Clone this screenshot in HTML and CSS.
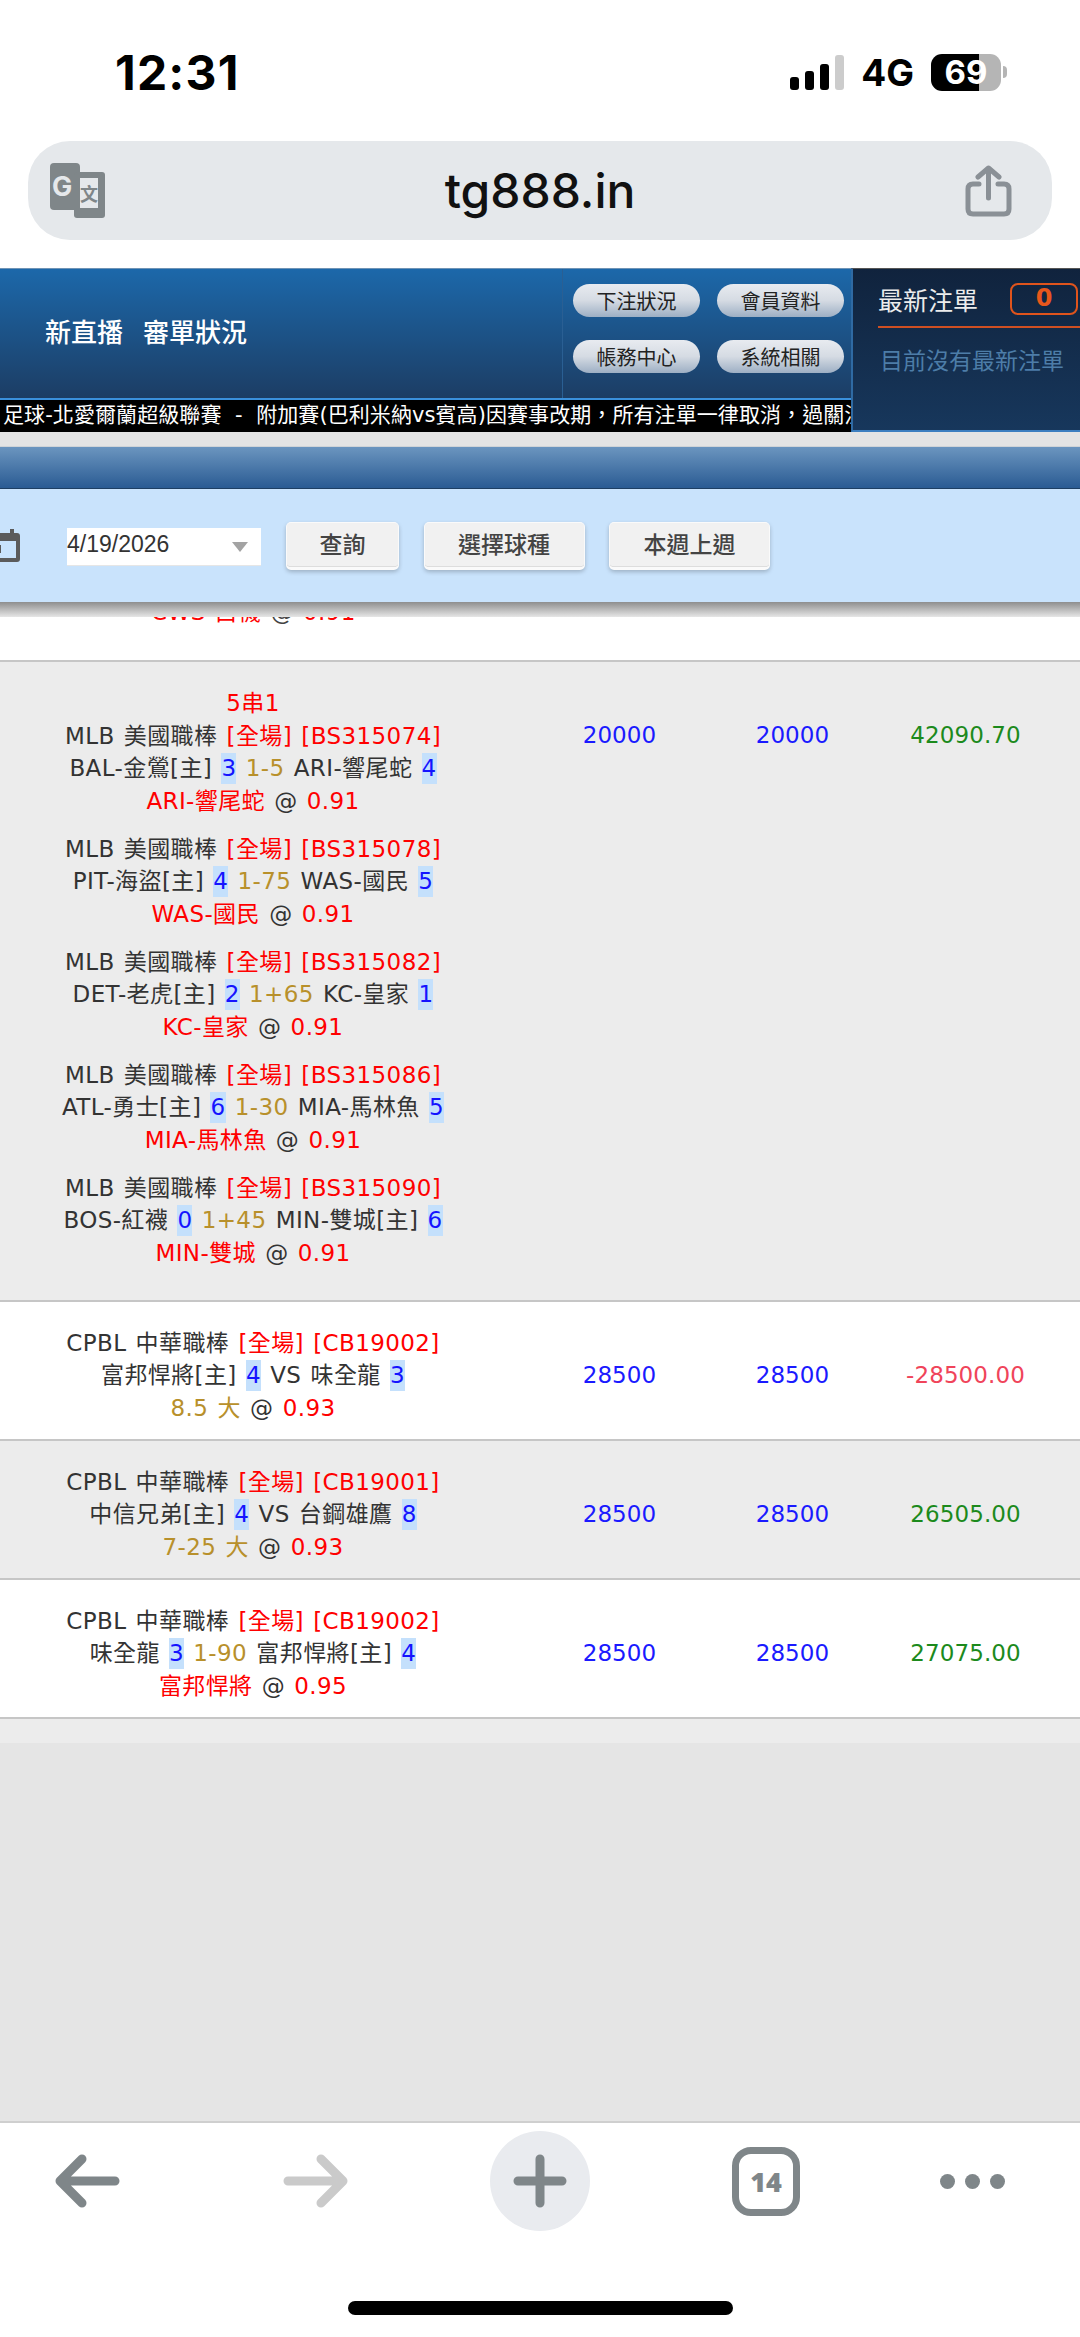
FILE: index.html
```html
<!DOCTYPE html>
<html lang="zh-Hant">
<head>
  <meta charset="UTF-8" />
  <meta name="viewport" content="width=device-width, initial-scale=1.0" />
  <title>tg888.in</title>
  <link rel="stylesheet" href="styles.css">
</head>
<body>
  <div class="phone">
    <div class="status-bar">
      <span class="clock">12:31</span>
      <div class="status-right">
        <div class="signal">
          <i class="bar bar-1"></i><i class="bar bar-2"></i><i class="bar bar-3"></i><i class="bar bar-4"></i>
        </div>
        <span class="network">4G</span>
        <span class="battery">69</span>
        <i class="battery-nub"></i>
      </div>
    </div>

    <div class="url-bar">
      <svg class="translate-icon" width="55" height="55" viewBox="0 0 55 55">
        <rect x="0" y="0" width="30" height="47" rx="4" fill="#7f8689"/>
        <rect x="24" y="9" width="31" height="46" rx="3" fill="#7f8689"/>
        <rect x="30" y="15" width="18" height="30" fill="#e5e8eb"/>
        <text x="2" y="33" class="translate-g">G</text>
        <text x="30" y="38" class="translate-zh">文</text>
      </svg>
      <span class="url-text">tg888.in</span>
      <svg class="share-icon" width="47" height="52" viewBox="0 0 47 52" fill="none" stroke="#8a9096" stroke-width="5" stroke-linecap="round" stroke-linejoin="round">
        <path d="M14 19H8q-5 0-5 5v20q0 5 5 5h31q5 0 5-5V24q0-5-5-5h-6"/>
        <path d="M23.500 33V3M13 12l10.500-9L34 12"/>
      </svg>
    </div>

    <header class="site-header">
      <div class="head-left">
        <div class="head-main">
          <div class="head-title"><span>新直播</span><span>審單狀況</span></div>
          <div class="head-btns">
            <a class="pill">下注狀況</a>
            <a class="pill">會員資料</a>
            <a class="pill">帳務中心</a>
            <a class="pill">系統相關</a>
          </div>
        </div>
        <div class="ticker">足球-北愛爾蘭超級聯賽&nbsp;&nbsp;-&nbsp;&nbsp;附加賽(巴利米納vs賓高)因賽事改期，所有注單一律取消，過關注單以一賠一計算</div>
      </div>
      <aside class="latest">
        <div class="latest-top">
          <span class="latest-title">最新注單</span>
          <span class="latest-badge">0</span>
        </div>
        <div class="latest-msg">目前沒有最新注單</div>
      </aside>
    </header>

    <div class="head-gap"></div>
    <div class="blue-band"></div>

    <div class="toolbar">
      <svg class="calendar-icon" width="36" height="33" viewBox="0 0 36 33">
        <path d="M3 4h7V0h4v4h12V0h4v4h3q3 0 3 3v23q0 3-3 3H3q-3 0-3-3V7q0-3 3-3zM4 12v17h28V12z" fill="#5b5b5b"/>
        <rect x="8" y="16" width="9" height="8" fill="#5b5b5b"/>
      </svg>
      <div class="date-select"><span>4/19/2026</span><i class="date-arrow"></i></div>
      <button class="tool-btn tool-btn-small">查詢</button>
      <button class="tool-btn">選擇球種</button>
      <button class="tool-btn">本週上週</button>
    </div>
    <div class="toolbar-shadow"></div>

    <div class="clip-row">
      <div class="clip-text"><span class="red">CWS-白襪</span> <span class="at">@</span> <span class="red">0.91</span></div>
    </div>

    <table class="bets">
      <colgroup>
        <col class="col-info"><col class="col-num"><col class="col-num"><col class="col-num"><col class="col-end">
      </colgroup>
      <tbody>
        <tr class="row-grey row-parlay">
          <td class="info">
            <div class="red">5串1</div>
            <div class="leg">
              <div>MLB 美國職棒 <span class="red">[全場] [BS315074]</span></div>
              <div>BAL-金鶯[主] <b class="score">3</b> <span class="gold">1-5</span> ARI-響尾蛇 <b class="score">4</b></div>
              <div><span class="red">ARI-響尾蛇</span> @ <span class="red">0.91</span></div>
            </div>
            <div class="leg">
              <div>MLB 美國職棒 <span class="red">[全場] [BS315078]</span></div>
              <div>PIT-海盜[主] <b class="score">4</b> <span class="gold">1-75</span> WAS-國民 <b class="score">5</b></div>
              <div><span class="red">WAS-國民</span> @ <span class="red">0.91</span></div>
            </div>
            <div class="leg">
              <div>MLB 美國職棒 <span class="red">[全場] [BS315082]</span></div>
              <div>DET-老虎[主] <b class="score">2</b> <span class="gold">1+65</span> KC-皇家 <b class="score">1</b></div>
              <div><span class="red">KC-皇家</span> @ <span class="red">0.91</span></div>
            </div>
            <div class="leg">
              <div>MLB 美國職棒 <span class="red">[全場] [BS315086]</span></div>
              <div>ATL-勇士[主] <b class="score">6</b> <span class="gold">1-30</span> MIA-馬林魚 <b class="score">5</b></div>
              <div><span class="red">MIA-馬林魚</span> @ <span class="red">0.91</span></div>
            </div>
            <div class="leg">
              <div>MLB 美國職棒 <span class="red">[全場] [BS315090]</span></div>
              <div>BOS-紅襪 <b class="score">0</b> <span class="gold">1+45</span> MIN-雙城[主] <b class="score">6</b></div>
              <div><span class="red">MIN-雙城</span> @ <span class="red">0.91</span></div>
            </div>
          </td>
          <td class="num blue">20000</td>
          <td class="num blue">20000</td>
          <td class="num green">42090.70</td>
          <td></td>
        </tr>
        <tr>
          <td class="info">
            <div>CPBL 中華職棒 <span class="red">[全場] [CB19002]</span></div>
            <div>富邦悍將[主] <b class="score">4</b> VS 味全龍 <b class="score">3</b></div>
            <div><span class="gold">8.5 大</span> @ <span class="red">0.93</span></div>
          </td>
          <td class="num blue">28500</td>
          <td class="num blue">28500</td>
          <td class="num loss">-28500.00</td>
          <td></td>
        </tr>
        <tr class="row-grey">
          <td class="info">
            <div>CPBL 中華職棒 <span class="red">[全場] [CB19001]</span></div>
            <div>中信兄弟[主] <b class="score">4</b> VS 台鋼雄鷹 <b class="score">8</b></div>
            <div><span class="gold">7-25 大</span> @ <span class="red">0.93</span></div>
          </td>
          <td class="num blue">28500</td>
          <td class="num blue">28500</td>
          <td class="num green">26505.00</td>
          <td></td>
        </tr>
        <tr>
          <td class="info">
            <div>CPBL 中華職棒 <span class="red">[全場] [CB19002]</span></div>
            <div>味全龍 <b class="score">3</b> <span class="gold">1-90</span> 富邦悍將[主] <b class="score">4</b></div>
            <div><span class="red">富邦悍將</span> @ <span class="red">0.95</span></div>
          </td>
          <td class="num blue">28500</td>
          <td class="num blue">28500</td>
          <td class="num green">27075.00</td>
          <td></td>
        </tr>
      </tbody>
    </table>

    <div class="table-end"></div>
    <div class="page-rest"></div>

    <nav class="bottom-bar">
      <div class="nav-row">
        <svg class="nav-back" width="65" height="54" viewBox="0 0 65 54" fill="none" stroke="#7f8689" stroke-width="9" stroke-linecap="round" stroke-linejoin="round">
          <path d="M60 27H5M27 5L5 27l22 22"/>
        </svg>
        <svg class="nav-forward" width="65" height="54" viewBox="0 0 65 54" fill="none" stroke="#cacaca" stroke-width="9" stroke-linecap="round" stroke-linejoin="round">
          <path d="M5 27h55M38 5l22 22-22 22"/>
        </svg>
        <div class="nav-plus">
          <svg width="54" height="54" viewBox="0 0 54 54" fill="none" stroke="#7f8689" stroke-width="9" stroke-linecap="round">
            <path d="M27 5v44M5 27h44"/>
          </svg>
        </div>
        <div class="nav-tabs">14</div>
        <div class="nav-dots"><i></i><i></i><i></i></div>
      </div>
      <div class="home-indicator"></div>
    </nav>
  </div>
</body>
</html>
```

FILE: styles.css
```css
* {
  box-sizing: border-box;
}

body {
  margin: 0;
  padding: 0;
  background-color: #ffffff;
  color: #333333;
  font-family: "DejaVu Sans", "Noto Sans CJK TC", sans-serif;
}

.phone {
  width: 1080px;
  height: 2337px;
  display: flex;
  flex-direction: column;
  overflow: hidden;
}

/* status bar */
.status-bar {
  height: 141px;
  flex: none;
  display: flex;
  justify-content: space-between;
  align-items: center;
  padding: 3px 73px 0 115px;
  color: #000000;
  font-family: Inter, "Liberation Sans", sans-serif;
}

.clock {
  font-size: 48px;
  font-weight: 700;
  letter-spacing: 1.2px;
}

.status-right {
  display: flex;
  align-items: center;
}

.signal {
  display: flex;
  align-items: flex-end;
  gap: 6px;
  height: 35px;
}

.bar {
  display: block;
  width: 9px;
  border-radius: 3px;
  background-color: #000000;
}

.bar-1 { height: 13px; }
.bar-2 { height: 19px; }
.bar-3 { height: 26px; }
.bar-4 { height: 35px; background-color: #cccccc; }

.network {
  margin-left: 17px;
  font-size: 37px;
  font-weight: 700;
}

.battery {
  margin-left: 17px;
  width: 70px;
  height: 37px;
  border-radius: 11px;
  background: linear-gradient(to right, #000000 69%, #b5b5b5 69%);
  color: #ffffff;
  font-size: 33px;
  font-weight: 700;
  line-height: 37px;
  text-align: center;
}

.battery-nub {
  display: block;
  width: 4px;
  height: 12px;
  margin-left: 2px;
  border-radius: 0 6px 6px 0;
  background-color: #b5b5b5;
}

/* url bar */
.url-bar {
  height: 99px;
  flex: none;
  margin: 0 28px 28px;
  padding: 0 40px;
  display: grid;
  grid-template-columns: 1fr auto 1fr;
  align-items: center;
  border-radius: 42px;
  background-color: #e5e8eb;
}

.translate-icon {
  margin-left: -18px;
}

.translate-g {
  font-family: Inter, sans-serif;
  font-size: 27px;
  font-weight: 700;
  fill: #e5e8eb;
}

.translate-zh {
  font-family: "Noto Sans CJK TC", sans-serif;
  font-size: 18px;
  font-weight: 700;
  fill: #7f8689;
}

.url-text {
  font-family: Inter, "Liberation Sans", sans-serif;
  font-size: 48px;
  font-weight: 500;
  color: #111111;
}

.share-icon {
  justify-self: end;
}

/* site header */
.site-header {
  height: 164px;
  flex: none;
  display: flex;
  font-family: "Noto Sans CJK TC", sans-serif;
}

.head-left {
  width: 851px;
  display: flex;
  flex-direction: column;
}

.head-main {
  height: 130px;
  display: flex;
  background: linear-gradient(to bottom, #1c68aa, #1c3d64);
  border-top: 1px solid #6f93b5;
}

.head-title {
  width: 563px;
  padding: 0 0 5px 45px;
  display: flex;
  align-items: center;
  gap: 20px;
  color: #ffffff;
  font-size: 26px;
  font-weight: 500;
  line-height: 1;
  border-right: 1px solid #2a5f93;
}

.head-btns {
  display: grid;
  grid-template-columns: 127px 127px;
  grid-auto-rows: 33px;
  column-gap: 17px;
  row-gap: 23px;
  padding: 15px 0 0 10px;
}

.pill {
  display: flex;
  align-items: center;
  justify-content: center;
  border-radius: 17px;
  background: linear-gradient(to bottom, #e8ebf0, #d5dbe3 50%, #9dafc4);
  color: #222222;
  font-size: 20px;
  line-height: 1;
}

.ticker {
  height: 34px;
  border-top: 2px solid #3a90dc;
  background-color: #000000;
  color: #ffffff;
  font-family: "DejaVu Sans", "Noto Sans CJK TC", sans-serif;
  font-size: 21px;
  letter-spacing: 0.08px;
  line-height: 31px;
  padding-left: 3px;
  white-space: nowrap;
  overflow: hidden;
}

.latest {
  width: 229px;
  background: linear-gradient(to bottom, #10233d, #17375c);
  border-top: 1px solid #555555;
  border-left: 2px solid #2f6aa3;
  border-bottom: 2px solid #3d7fc0;
  padding-left: 25px;
}

.latest-top {
  height: 59px;
  display: flex;
  align-items: center;
  justify-content: space-between;
  padding-top: 3px;
  padding-right: 2px;
  border-bottom: 2px solid #cf4f22;
}

.latest-title {
  color: #ececec;
  font-size: 25px;
  line-height: 1;
}

.latest-badge {
  width: 68px;
  height: 32px;
  border: 2px solid #e0541c;
  border-radius: 8px;
  color: #e8571c;
  font-family: "DejaVu Sans", sans-serif;
  font-size: 24px;
  font-weight: 700;
  line-height: 26px;
  text-align: center;
}

.latest-msg {
  padding: 15px 0 0 2px;
  color: #4d7da8;
  font-size: 23px;
  line-height: 32px;
}

.head-gap {
  height: 15px;
  flex: none;
  background-color: #e4e4e4;
  border-bottom: 1px solid #d0d4d8;
}

.blue-band {
  height: 42px;
  flex: none;
  background: linear-gradient(to bottom, #6b95bf, #2a5b93);
  border-bottom: 1px solid #1e3f63;
}

/* date toolbar */
.toolbar {
  height: 113px;
  flex: none;
  display: flex;
  align-items: center;
  background-color: #c9e3fc;
  font-family: "Noto Sans CJK TC", sans-serif;
}

.calendar-icon {
  margin-left: -16px;
  margin-right: 47px;
}

.date-select {
  width: 194px;
  height: 38px;
  margin-top: 3px;
  margin-right: 25px;
  display: flex;
  justify-content: space-between;
  align-items: center;
  padding-right: 13px;
  padding-bottom: 5px;
  background-color: #ffffff;
  border-bottom: 1px solid #e6e6e6;
  color: #333333;
  font-family: "Liberation Sans", sans-serif;
  font-size: 23px;
}

.date-arrow {
  width: 0;
  height: 0;
  margin-top: 6px;
  border-left: 8px solid transparent;
  border-right: 8px solid transparent;
  border-top: 10px solid #a3a3a3;
}

.tool-btn {
  width: 161px;
  height: 48px;
  margin-right: 24.500px;
  padding: 0 0 3px;
  border: 1px solid #fafafa;
  border-bottom: 3px solid #fafafa;
  border-radius: 5px;
  background-color: #f1f1f1;
  box-shadow: 0 2px 4px rgba(0, 0, 0, 0.22), inset 0 -1px 0 #dddddd;
  color: #444444;
  font-family: "Noto Sans CJK TC", sans-serif;
  font-size: 23px;
  font-weight: 500;
  line-height: 1;
}

.tool-btn-small {
  width: 113px;
}

.toolbar-shadow {
  height: 15px;
  flex: none;
  position: relative;
  z-index: 2;
  background: linear-gradient(to bottom, #8e8e8e, #e6e6e6);
}

.clip-row {
  height: 45px;
  flex: none;
  overflow: hidden;
  border-bottom: 2px solid #c6c6c6;
  background-color: #ffffff;
  font-size: 23px;
  letter-spacing: 0.4px;
  word-spacing: 1.500px;
  line-height: 32.5px;
  text-align: center;
}

.clip-text {
  width: 507px;
  margin-top: -21px;
  color: #444444;
}

/* bets table */
.bets {
  width: 1107px;
  flex: none;
  margin-left: -27px;
  border-collapse: separate;
  border-spacing: 0;
  table-layout: fixed;
  font-size: 23px;
  letter-spacing: 0.4px;
  word-spacing: 1.500px;
  line-height: 32.5px;
}

.col-info { width: 560px; }
.col-num { width: 173px; }
.col-end { width: 28px; }

.bets td {
  height: 139px;
  padding: 10px 0 0;
  text-align: center;
  vertical-align: middle;
  border-bottom: 2px solid #c6c6c6;
  white-space: nowrap;
}

.bets .num {
  letter-spacing: 0.1px;
}

.row-grey td {
  background-color: #ececec;
}

.bets .row-parlay td {
  height: 640px;
  padding-top: 25px;
  vertical-align: top;
}

.bets .row-parlay .num {
  padding-top: 57px;
}

.leg + .leg {
  margin-top: 15.500px;
}

.red { color: #ff0000; }
.gold { color: #b8902b; }
.blue { color: #1a1aff; }
.green { color: #1c8a1c; }
.loss { color: #f0445a; }

.score {
  display: inline-block;
  line-height: 31px;
  font-weight: normal;
  color: #1414ff;
  background-color: #c4e0fc;
}

.table-end {
  height: 24px;
  flex: none;
  background-color: #ececec;
}

.page-rest {
  flex: 1;
  background-color: #e5e5e5;
}

/* browser bottom bar */
.bottom-bar {
  height: 216px;
  flex: none;
  background-color: #ffffff;
  border-top: 2px solid #cfcfcf;
  padding: 8px 0 0 55px;
}

.nav-row {
  display: flex;
  align-items: center;
  gap: 142px;
}

.nav-forward {
  margin-left: 21px;
}

.nav-plus {
  width: 100px;
  height: 100px;
  display: flex;
  align-items: center;
  justify-content: center;
  border-radius: 50%;
  background-color: #e9ebef;
}

.nav-tabs {
  width: 68px;
  height: 69px;
  border: 7px solid #7f8689;
  border-radius: 19px;
  color: #7f8689;
  font-family: "Open Sans", sans-serif;
  font-size: 27px;
  font-weight: 800;
  line-height: 55px;
  text-align: center;
}

.nav-dots {
  display: flex;
  gap: 10px;
  margin-left: -2px;
}

.nav-dots i {
  display: block;
  width: 15px;
  height: 15px;
  border-radius: 50%;
  background-color: #7f8689;
}

.home-indicator {
  width: 385px;
  height: 14px;
  margin: 70px 0 0 293px;
  border-radius: 7px;
  background-color: #000000;
}
```
